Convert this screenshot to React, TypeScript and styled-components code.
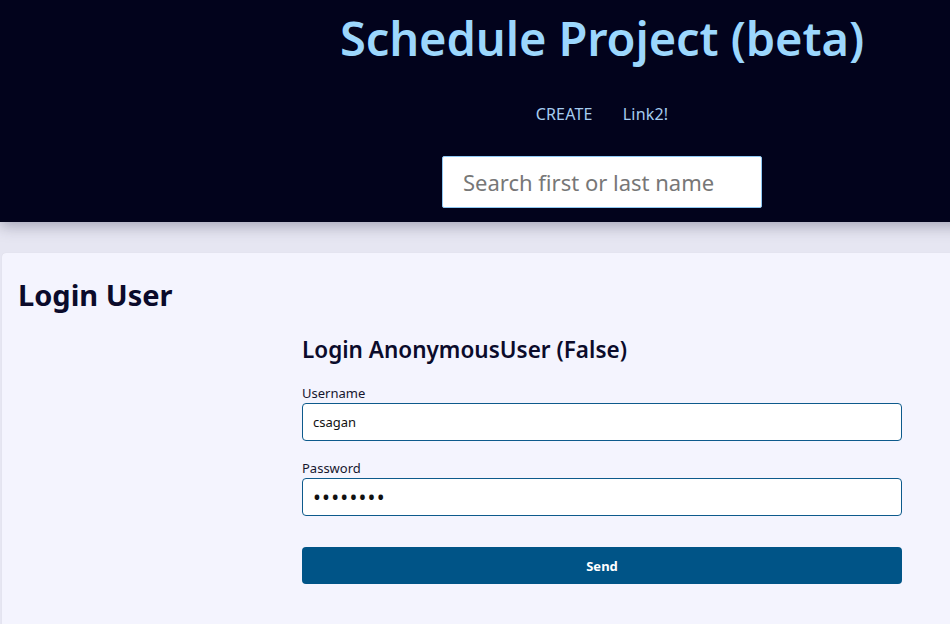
import React from "react";
import styled, { createGlobalStyle } from "styled-components";

const Global = createGlobalStyle`
  html, body { margin: 0; padding: 0; overflow: hidden; }
  body { background: #e6e6f2; font-family: "Noto Sans", "Open Sans", sans-serif; }
`;

const Page = styled.div`
  width: 1204px;
  min-height: 624px;
  background: #e6e6f2;
`;

const Header = styled.header`
  background: #02031c;
  height: 222px;
  display: flex;
  flex-direction: column;
  align-items: center;
  box-shadow: 0 4px 14px rgba(40, 40, 70, 0.35);
  position: relative;
  z-index: 1;
`;

const Title = styled.h1`
  margin: 8px 0 0;
  font-size: 47px;
  font-weight: 600;
  color: #9cd7fd;
  line-height: 60px;
  letter-spacing: -0.1px;
`;

const Nav = styled.nav`
  display: flex;
  gap: 30px;
  margin-top: 35px;
`;

const NavLink = styled.a`
  color: #a6cdf0;
  font-size: 16px;
  line-height: 22px;
  letter-spacing: 0.2px;
  text-decoration: none;
`;

const Search = styled.input`
  margin-top: 31px;
  width: 320px;
  height: 52px;
  box-sizing: border-box;
  border: 1px solid #8fc8f2;
  border-radius: 2px;
  padding: 0 20px;
  font-family: inherit;
  font-size: 22px;
  color: #333;
  background: #fff;
  &::placeholder { color: #777; }
  outline: none;
`;

const Main = styled.main`
  padding: 31px 2px 0;
`;

const Card = styled.section`
  background: #f4f4fe;
  border-radius: 4px;
  padding: 22px 16px 40px;
  min-height: 340px;
  box-shadow: 0 0 1px rgba(0,0,0,0.1);
`;

const CardTitle = styled.h2`
  margin: 0;
  font-size: 29px;
  font-weight: 700;
  color: #0b0b2b;
  line-height: 40px;
`;

const Form = styled.form`
  width: 600px;
  margin: 20px 0 0 284px;
  display: flex;
  flex-direction: column;
`;

const FormTitle = styled.h3`
  margin: 0 0 19px;
  font-size: 22.5px;
  font-weight: 600;
  color: #0b0b2b;
  line-height: 30px;
`;

const Label = styled.label<{ $first?: boolean }>`
  font-size: 13px;
  color: #16162e;
  line-height: 18px;
  margin-top: ${(p) => (p.$first ? "0" : "18px")};
  margin-bottom: 1px;
`;

const Field = styled.input<{ $secret?: boolean }>`
  height: 38px;
  box-sizing: border-box;
  border: 1px solid #0d5a8c;
  border-radius: 4px;
  background: #fff;
  padding: 0 10px;
  font-family: inherit;
  font-size: ${(p) => (p.$secret ? "21px" : "13px")};
  letter-spacing: ${(p) => (p.$secret ? "1.2px" : "normal")};
  color: #111;
  outline: none;
`;

const Button = styled.button`
  margin-top: 31px;
  height: 37px;
  border: none;
  border-radius: 4px;
  background: #005487;
  color: #fff;
  font-family: inherit;
  font-weight: 700;
  font-size: 13px;
`;

export default function App() {
  return (
    <Page>
      <Global />
      <Header>
        <Title>Schedule Project (beta)</Title>
        <Nav>
          <NavLink href="#">CREATE</NavLink>
          <NavLink href="#">Link2!</NavLink>
        </Nav>
        <Search placeholder="Search first or last name" />
      </Header>
      <Main>
        <Card>
          <CardTitle>Login User</CardTitle>
          <Form onSubmit={(e) => e.preventDefault()}>
            <FormTitle>Login AnonymousUser (False)</FormTitle>
            <Label $first>Username</Label>
            <Field defaultValue="csagan" />
            <Label>Password</Label>
            <Field $secret type="password" defaultValue="password" />
            <Button type="submit">Send</Button>
          </Form>
        </Card>
      </Main>
    </Page>
  );
}
